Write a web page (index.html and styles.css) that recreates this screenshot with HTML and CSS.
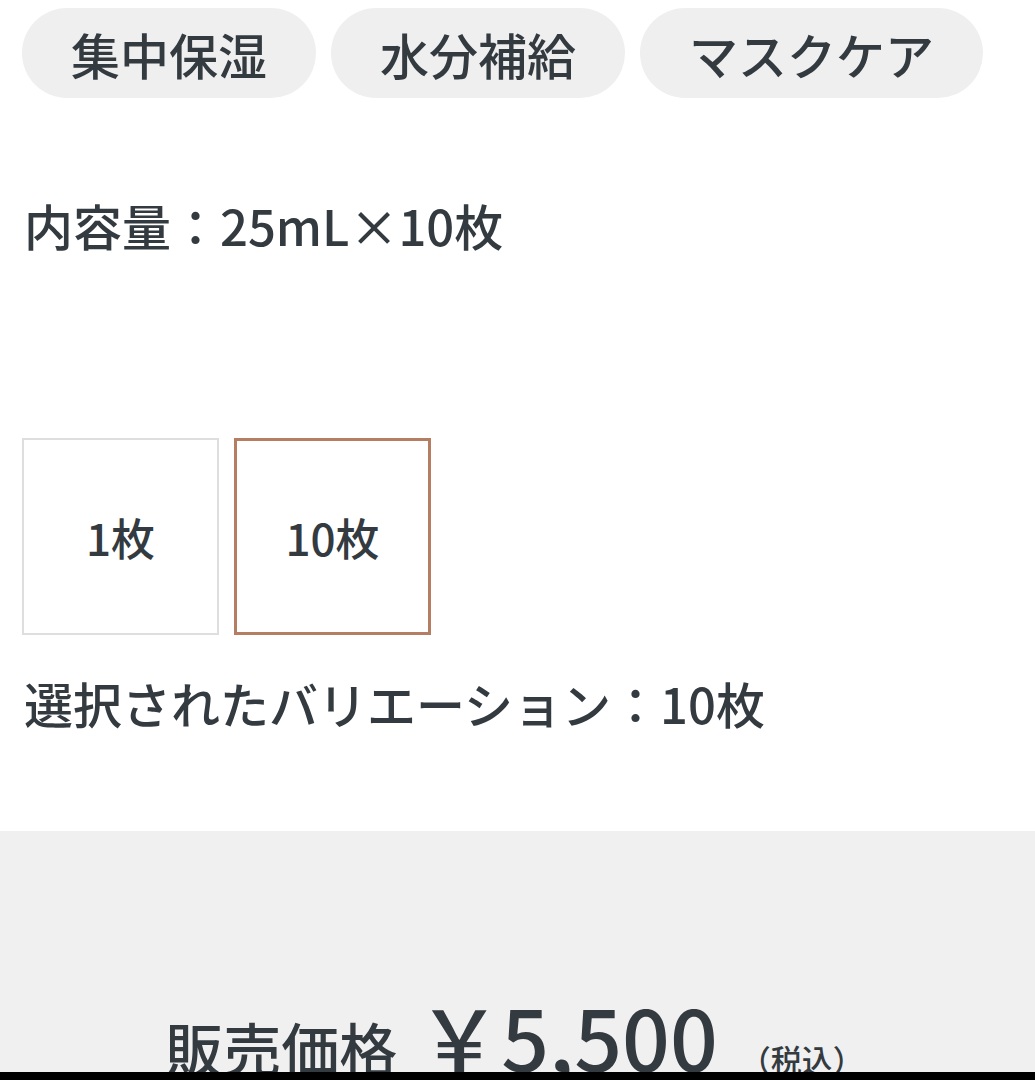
FILE: index.html
```html
<!DOCTYPE html>
<html lang="ja">
<head>
<meta charset="utf-8">
<link rel="stylesheet" href="styles.css">
</head>
<body>
<div class="page">
  <div class="main">
    <div class="tags">
      <span class="tag">集中保湿</span>
      <span class="tag">水分補給</span>
      <span class="tag">マスクケア</span>
    </div>
    <p class="content">内容量：25mL×10枚</p>
    <div class="variations">
      <div class="var">1枚</div>
      <div class="var selected">10枚</div>
    </div>
    <p class="chosen">選択されたバリエーション：10枚</p>
  </div>
  <div class="pricebox">
    <div class="price">
      <span class="label">販売価格</span>
      <span class="amount">￥5,500</span>
      <span class="tax">（税込）</span>
    </div>
  </div>
  <div class="bottombar"></div>
</div>
</body>
</html>
```

FILE: styles.css
```css
html, body {
  margin: 0;
  padding: 0;
  background: #ffffff;
}
body {
  font-family: "Noto Sans CJK JP", "Noto Sans", sans-serif;
  color: #333a40;
  font-weight: 500;
}
.page {
  width: 1035px;
  height: 1080px;
  overflow: hidden;
  display: flex;
  flex-direction: column;
}
.main {
  padding: 8px 0 0 22px;
  height: 831px;
  box-sizing: border-box;
}
.tags {
  display: flex;
  gap: 15px;
}
.tag {
  display: flex;
  align-items: center;
  height: 90px;
  padding: 0 49px;
  border-radius: 45px;
  background: #efefef;
  font-size: 49px;
  line-height: 1;
}
.content {
  margin: 87px 0 0 2px;
  font-size: 49px;
  line-height: 80px;
}
.variations {
  display: flex;
  gap: 15px;
  margin-top: 173px;
}
.var {
  width: 197px;
  height: 197px;
  box-sizing: border-box;
  border: 2px solid #dedede;
  display: flex;
  align-items: center;
  justify-content: center;
  font-size: 44px;
}
.var.selected {
  border: 3px solid #b57d62;
}
.chosen {
  margin: 28px 0 0 2px;
  font-size: 49px;
  line-height: 80px;
}
.pricebox {
  flex: 1;
  background: #f0f0f0;
  display: flex;
  align-items: flex-end;
  justify-content: center;
  overflow: hidden;
}
.price {
  display: flex;
  align-items: baseline;
  margin-bottom: -24px;
  padding-right: 6px;
}
.label {
  font-size: 58px;
}
.amount {
  font-size: 84px;
  margin-left: 20px;
}
.tax {
  font-size: 31px;
  margin-left: 22px;
}
.bottombar {
  height: 8px;
  background: #000;
}
```
